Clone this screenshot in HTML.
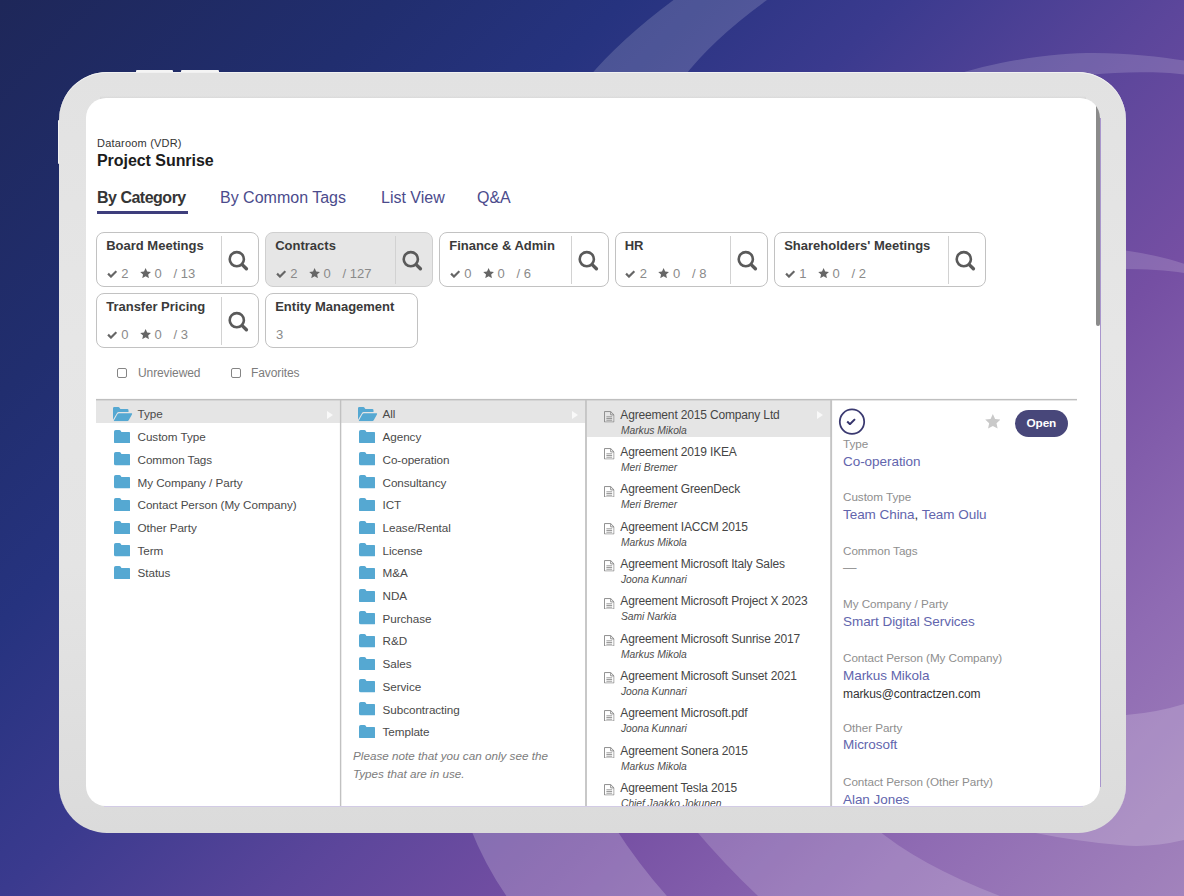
<!DOCTYPE html>
<html>
<head>
<meta charset="utf-8">
<title>Project Sunrise</title>
<style>
*{box-sizing:border-box;margin:0;padding:0}
html,body{width:1184px;height:896px;overflow:hidden}
body{font-family:"Liberation Sans",sans-serif;position:relative;background:#3b3a8e;color:#444}
.abs{position:absolute}
#bg{position:absolute;left:0;top:0;width:1184px;height:896px;
 background:linear-gradient(135deg,#1e2759 0%,#212e6f 19%,#26337f 30%,#3a3a8e 43%,#5c469b 57%,#754fa3 69%,#8f6bb3 85%,#a283bc 100%)}
#swoosh{position:absolute;left:0;top:0}
#frame{position:absolute;left:59px;top:72px;width:1067px;height:760.5px;border-radius:48px;
 background:linear-gradient(180deg,#e2e2e2 0%,#e6e6e6 35%,#e4e4e4 65%,#dbdbdb 100%);box-shadow:inset 0 1px 0 #f1f1f1}
.bump{position:absolute;top:69.8px;height:3.2px;background:#f4f4f4;border-radius:1px}
#screen{position:absolute;left:86px;top:98px;width:1014px;height:708px;border-radius:20px;background:#fff;overflow:hidden}
#page{position:absolute;left:-86px;top:-98px;width:1184px;height:896px}
.t{position:absolute;white-space:nowrap;line-height:1}
/* header */
.crumb{left:97px;top:138px;font-size:11px;color:#333;letter-spacing:.2px}
.title{left:97px;top:153px;font-size:16px;font-weight:700;color:#1c1c1c;letter-spacing:-.05px}
.tab{top:190px;font-size:16px;color:#4b4b8c}
.tab.on{color:#353535;font-weight:700;letter-spacing:-.5px}
.tabline{left:97px;top:210.6px;width:91px;height:3px;background:#3e3e7c}
/* cards */
.card{position:absolute;height:55px;border:1px solid #c2c2c2;border-radius:8px;background:#fff}
.card.sel{background:#e6e6e6;border-color:#cfcfcf}
.card .n{position:absolute;left:9.2px;top:6px;font-size:13px;font-weight:700;color:#3a3a3a;white-space:nowrap;line-height:1}
.card .s{position:absolute;left:10px;top:34px;font-size:13px;color:#8a8a8a;white-space:nowrap;line-height:1;height:14px}
.card .dv{position:absolute;right:36px;top:3px;width:1px;height:48px;background:#d2d2d2}
.card svg.q{position:absolute;right:9px;top:17px}
.s i{position:absolute;top:0;font-style:normal}
.s svg{position:absolute}

/* filters */
.cb{position:absolute;width:10px;height:10px;border:1px solid #858585;border-radius:2px;background:#fff;top:368px}
.fl{top:367px;font-size:12px;color:#7c7c7c;letter-spacing:-.1px}
/* panel */
.ptop{left:96px;top:399px;width:981px;height:2px;background:#bebebe}
.vd{position:absolute;top:400px;width:1px;height:420px;background:#b9b9b9}
.selrow{position:absolute;background:#e5e5e5}
.fi{position:absolute;color:#55a8d2}
.ft{font-size:11.7px;color:#4a4a4a;letter-spacing:-.05px;margin-left:-.5px}
.car{position:absolute;width:0;height:0;border-left:6.7px solid #f9f9f9;border-top:4px solid transparent;border-bottom:4px solid transparent}
.note{font-size:11.7px;font-style:italic;color:#7c7c7c}
.dt{font-size:12px;color:#454545;letter-spacing:-.16px}
.ds{font-size:10.3px;font-style:italic;color:#4e4e4e;letter-spacing:-.05px}
.di{position:absolute;color:#8a8a8a}
.lb{left:843px;font-size:11.7px;color:#8e8e8e;letter-spacing:-.05px}
.vl{left:843px;font-size:13.5px;color:#6265ad;letter-spacing:-.05px}
.em{left:843px;font-size:12px;color:#333;letter-spacing:-.1px}
.circ{position:absolute;left:839px;top:408.5px;width:26.2px;height:26.2px;border:1.7px solid #3a3970;border-radius:50%}
.open{position:absolute;left:1014.7px;top:409.8px;width:53.4px;height:27px;border-radius:13.5px;background:#48477a;color:#fff;font-size:11.8px;font-weight:700;text-align:center;line-height:27px;letter-spacing:-.15px}
</style>
</head>
<body>
<div id="bg"></div>
<svg id="swoosh" width="1184" height="896" viewBox="0 0 1184 896">
<g fill="#fff" fill-opacity=".16">
<path d="M588,78 Q621,39 673.5,0 L767,0 Q713,39 683,78 Z"/>
<path d="M945,78 C1005,58 1060,53 1094,53 C1130,53 1160,57 1184,60.5 L1184,74.5 C1160,71.5 1120,71.5 1090,75 Z"/>
<path d="M1090,246 Q1150,252 1184,263.8 L1184,273 Q1150,267.5 1090,269.5 Z"/>
<path d="M1000,750 L1126,715 Q1157,712.5 1184,704 L1184,840 Q1150,848 1122,845.3 Q1080,842 1030,832 L1000,800 Z" fill-opacity=".18"/>
<path d="M469.5,826 Q484.5,864.4 506.4,896 L666.9,896 Q638.6,864.4 614,826 Z" fill-opacity=".2"/>
<path d="M692,826 Q724.3,864.4 758,896 L1000,896 Q917.6,864.4 873,826 Z" fill-opacity=".17"/>
</g>
</svg>
<div class="bump" style="left:135.6px;width:37.4px"></div>
<div class="abs" style="left:57.6px;top:119.8px;width:3px;height:44.3px;background:#f2f2f2;border-radius:1px"></div>
<div class="bump" style="left:181.3px;width:37.7px"></div>
<div id="frame"></div>
<div class="abs" style="left:1100px;top:118px;width:1px;height:669px;background:#a996cd"></div>
<div class="abs" style="left:104px;top:806px;width:979px;height:1px;background:#d2cbe5"></div>
<div class="abs" style="left:100px;top:95.6px;width:986px;height:3px;background:linear-gradient(180deg,rgba(208,208,208,0),#d4d4d4)"></div>
<div id="screen"><div id="page">

<div class="t crumb">Dataroom (VDR)</div>
<div class="t title">Project Sunrise</div>
<div class="t tab on" style="left:97px">By Category</div>
<div class="t tab" style="left:220px">By Common Tags</div>
<div class="t tab" style="left:381px">List View</div>
<div class="t tab" style="left:477px">Q&amp;A</div>
<div class="abs tabline"></div>

<div class="abs" style="left:1096.3px;top:98px;width:3.8px;height:228.4px;background:#8b8b8b;border-radius:0 0 2px 2px"></div>
<!--CARDS-->
<svg width="0" height="0" style="position:absolute">
<defs>
<symbol id="ck" viewBox="0 0 10 8"><path d="M0.2 4.3 L1.7 2.8 L3.8 4.9 L8.3 0.4 L9.8 1.9 L3.8 7.9 Z" fill="currentColor"/></symbol>
<symbol id="st" viewBox="0 0 20 19"><path d="M10 0 L12.9 6.3 L19.8 7.1 L14.7 11.8 L16.1 18.6 L10 15.2 L3.9 18.6 L5.3 11.8 L0.2 7.1 L7.1 6.3 Z" fill="currentColor"/></symbol>
<symbol id="sr" viewBox="0 0 22 22"><circle cx="9.8" cy="9.2" r="7.1" fill="none" stroke="currentColor" stroke-width="2.6"/><path d="M15.2 14.6 L19.4 18.8" stroke="currentColor" stroke-width="3.4" stroke-linecap="round"/></symbol>
<symbol id="fc" viewBox="0 0 17 14" preserveAspectRatio="none"><path d="M1.8 0 H5.4 Q6.4 0 6.9 .8 L7.6 2 H15.2 Q17 2 17 3.8 V12.2 Q17 14 15.2 14 H1.8 Q0 14 0 12.2 V1.8 Q0 0 1.8 0 Z" fill="currentColor"/></symbol>
<symbol id="fo" viewBox="0 0 19 14" preserveAspectRatio="none"><path d="M1.2 0 H5.2 Q6 0 6.4 .7 L7.2 2 H14 Q15.2 2 15.2 3.2 V5 H5.6 Q4.4 5 3.8 6 L0 12.4 V1.2 Q0 0 1.2 0 Z" fill="currentColor"/><path d="M5.9 6.2 H18.2 Q19.3 6.2 18.7 7.2 L15.4 13 Q14.8 14 13.7 14 H1.2 Q0.4 14 0.9 13.1 L4.3 7.1 Q4.8 6.2 5.9 6.2 Z" fill="currentColor"/></symbol>
<symbol id="dc" viewBox="0 0 11 12"><path d="M0.5 0.5 H7 L10.5 4 V11.5 H0.5 Z M7 0.5 V4 H10.5" fill="none" stroke="currentColor" stroke-width="1"/><path d="M2.5 6 H8.5 M2.5 7.8 H8.5 M2.5 9.6 H8.5" stroke="currentColor" stroke-width="0.9"/></symbol>
</defs></svg>

<div class="card" style="left:96px;top:232px;width:163px"><div class="n">Board Meetings</div><div class="s"><svg style="left:-.3px;top:2.6px;color:#666" width="10.4" height="8.2"><use href="#ck"/></svg><i style="left:14.2px">2</i><svg style="left:32.6px;top:1px;color:#666" width="11.2" height="10.4"><use href="#st"/></svg><i style="left:47.5px">0</i><i style="left:66.5px">/ 13</i></div><div class="dv"></div><svg class="q" width="22" height="22" style="color:#5a5a5a"><use href="#sr"/></svg></div>
<div class="card sel" style="left:265px;top:232px;width:168px"><div class="n">Contracts</div><div class="s"><svg style="left:-.3px;top:2.6px;color:#666" width="10.4" height="8.2"><use href="#ck"/></svg><i style="left:14.2px">2</i><svg style="left:32.6px;top:1px;color:#666" width="11.2" height="10.4"><use href="#st"/></svg><i style="left:47.5px">0</i><i style="left:66.5px">/ 127</i></div><div class="dv"></div><svg class="q" width="22" height="22" style="color:#5a5a5a"><use href="#sr"/></svg></div>
<div class="card" style="left:439px;top:232px;width:170px"><div class="n">Finance &amp; Admin</div><div class="s"><svg style="left:-.3px;top:2.6px;color:#666" width="10.4" height="8.2"><use href="#ck"/></svg><i style="left:14.2px">0</i><svg style="left:32.6px;top:1px;color:#666" width="11.2" height="10.4"><use href="#st"/></svg><i style="left:47.5px">0</i><i style="left:66.5px">/ 6</i></div><div class="dv"></div><svg class="q" width="22" height="22" style="color:#5a5a5a"><use href="#sr"/></svg></div>
<div class="card" style="left:614.5px;top:232px;width:153px"><div class="n">HR</div><div class="s"><svg style="left:-.3px;top:2.6px;color:#666" width="10.4" height="8.2"><use href="#ck"/></svg><i style="left:14.2px">2</i><svg style="left:32.6px;top:1px;color:#666" width="11.2" height="10.4"><use href="#st"/></svg><i style="left:47.5px">0</i><i style="left:66.5px">/ 8</i></div><div class="dv"></div><svg class="q" width="22" height="22" style="color:#5a5a5a"><use href="#sr"/></svg></div>
<div class="card" style="left:774px;top:232px;width:212px"><div class="n">Shareholders' Meetings</div><div class="s"><svg style="left:-.3px;top:2.6px;color:#666" width="10.4" height="8.2"><use href="#ck"/></svg><i style="left:14.2px">1</i><svg style="left:32.6px;top:1px;color:#666" width="11.2" height="10.4"><use href="#st"/></svg><i style="left:47.5px">0</i><i style="left:66.5px">/ 2</i></div><div class="dv"></div><svg class="q" width="22" height="22" style="color:#5a5a5a"><use href="#sr"/></svg></div>
<div class="card" style="left:96px;top:293px;width:163px"><div class="n">Transfer Pricing</div><div class="s"><svg style="left:-.3px;top:2.6px;color:#666" width="10.4" height="8.2"><use href="#ck"/></svg><i style="left:14.2px">0</i><svg style="left:32.6px;top:1px;color:#666" width="11.2" height="10.4"><use href="#st"/></svg><i style="left:47.5px">0</i><i style="left:66.5px">/ 3</i></div><div class="dv"></div><svg class="q" width="22" height="22" style="color:#5a5a5a"><use href="#sr"/></svg></div>
<div class="card" style="left:265px;top:293px;width:153px"><div class="n">Entity Management</div><div class="s"><i style="left:0">3</i></div></div>
<!--/CARDS-->
<!--FILTERS-->
<div class="cb" style="left:117px"></div><div class="t fl" style="left:138px">Unreviewed</div>
<div class="cb" style="left:230.5px"></div><div class="t fl" style="left:251px">Favorites</div>
<!--/FILTERS-->
<!--PANEL-->
<div class="selrow" style="left:96px;top:400px;width:244px;height:23px"></div>
<div class="selrow" style="left:341px;top:400px;width:244.5px;height:23px"></div>
<div class="selrow" style="left:586.5px;top:400px;width:244px;height:37.4px"></div>
<svg class="abs" style="left:0;top:0" width="1184" height="896" viewBox="0 0 1184 896">
<rect x="96" y="398.9" width="981" height="1.5" fill="#bfbfbf"/>
<rect x="339.9" y="400" width="1.4" height="420" fill="#c1c1c1"/>
<rect x="585.1" y="400" width="1.8" height="420" fill="#c3c3c3"/>
<rect x="830.2" y="400" width="1.9" height="420" fill="#c4c4c4"/>
</svg>

<svg class="fi" style="left:113.2px;top:407.4px" width="19.4" height="14.3"><use href="#fo"/></svg>
<div class="t ft" style="left:138px;top:408.4px">Type</div>
<svg class="fi" style="left:113.60000000000001px;top:429.7px" width="16.6" height="13.6"><use href="#fc"/></svg>
<div class="t ft" style="left:138px;top:431.1px">Custom Type</div>
<svg class="fi" style="left:113.60000000000001px;top:452.4px" width="16.6" height="13.6"><use href="#fc"/></svg>
<div class="t ft" style="left:138px;top:453.8px">Common Tags</div>
<svg class="fi" style="left:113.60000000000001px;top:475.1px" width="16.6" height="13.6"><use href="#fc"/></svg>
<div class="t ft" style="left:138px;top:476.5px">My Company / Party</div>
<svg class="fi" style="left:113.60000000000001px;top:497.8px" width="16.6" height="13.6"><use href="#fc"/></svg>
<div class="t ft" style="left:138px;top:499.2px">Contact Person (My Company)</div>
<svg class="fi" style="left:113.60000000000001px;top:520.5px" width="16.6" height="13.6"><use href="#fc"/></svg>
<div class="t ft" style="left:138px;top:521.9px">Other Party</div>
<svg class="fi" style="left:113.60000000000001px;top:543.2px" width="16.6" height="13.6"><use href="#fc"/></svg>
<div class="t ft" style="left:138px;top:544.6px">Term</div>
<svg class="fi" style="left:113.60000000000001px;top:565.9px" width="16.6" height="13.6"><use href="#fc"/></svg>
<div class="t ft" style="left:138px;top:567.3px">Status</div>
<div class="car" style="left:327px;top:410.8px"></div>
<svg class="fi" style="left:358.4px;top:407.4px" width="19.4" height="14.3"><use href="#fo"/></svg>
<div class="t ft" style="left:383px;top:408.4px">All</div>
<svg class="fi" style="left:358.79999999999995px;top:429.7px" width="16.6" height="13.6"><use href="#fc"/></svg>
<div class="t ft" style="left:383px;top:431.1px">Agency</div>
<svg class="fi" style="left:358.79999999999995px;top:452.4px" width="16.6" height="13.6"><use href="#fc"/></svg>
<div class="t ft" style="left:383px;top:453.8px">Co-operation</div>
<svg class="fi" style="left:358.79999999999995px;top:475.1px" width="16.6" height="13.6"><use href="#fc"/></svg>
<div class="t ft" style="left:383px;top:476.5px">Consultancy</div>
<svg class="fi" style="left:358.79999999999995px;top:497.8px" width="16.6" height="13.6"><use href="#fc"/></svg>
<div class="t ft" style="left:383px;top:499.2px">ICT</div>
<svg class="fi" style="left:358.79999999999995px;top:520.5px" width="16.6" height="13.6"><use href="#fc"/></svg>
<div class="t ft" style="left:383px;top:521.9px">Lease/Rental</div>
<svg class="fi" style="left:358.79999999999995px;top:543.2px" width="16.6" height="13.6"><use href="#fc"/></svg>
<div class="t ft" style="left:383px;top:544.6px">License</div>
<svg class="fi" style="left:358.79999999999995px;top:565.9px" width="16.6" height="13.6"><use href="#fc"/></svg>
<div class="t ft" style="left:383px;top:567.3px">M&amp;A</div>
<svg class="fi" style="left:358.79999999999995px;top:588.6px" width="16.6" height="13.6"><use href="#fc"/></svg>
<div class="t ft" style="left:383px;top:590.0px">NDA</div>
<svg class="fi" style="left:358.79999999999995px;top:611.3px" width="16.6" height="13.6"><use href="#fc"/></svg>
<div class="t ft" style="left:383px;top:612.7px">Purchase</div>
<svg class="fi" style="left:358.79999999999995px;top:634.0px" width="16.6" height="13.6"><use href="#fc"/></svg>
<div class="t ft" style="left:383px;top:635.4px">R&amp;D</div>
<svg class="fi" style="left:358.79999999999995px;top:656.7px" width="16.6" height="13.6"><use href="#fc"/></svg>
<div class="t ft" style="left:383px;top:658.1px">Sales</div>
<svg class="fi" style="left:358.79999999999995px;top:679.4px" width="16.6" height="13.6"><use href="#fc"/></svg>
<div class="t ft" style="left:383px;top:680.8px">Service</div>
<svg class="fi" style="left:358.79999999999995px;top:702.1px" width="16.6" height="13.6"><use href="#fc"/></svg>
<div class="t ft" style="left:383px;top:703.5px">Subcontracting</div>
<svg class="fi" style="left:358.79999999999995px;top:724.8px" width="16.6" height="13.6"><use href="#fc"/></svg>
<div class="t ft" style="left:383px;top:726.2px">Template</div>
<div class="car" style="left:572px;top:410.8px"></div>
<div class="t note" style="left:353px;top:749.5px">Please note that you can only see the</div>
<div class="t note" style="left:353px;top:767.5px">Types that are in use.</div>
<svg class="di" style="left:604px;top:411.1px" width="10.5" height="11.6"><use href="#dc"/></svg>
<div class="t dt" style="left:620.3px;top:408.8px">Agreement 2015 Company Ltd</div>
<div class="t ds" style="left:621px;top:425.8px">Markus Mikola</div>
<svg class="di" style="left:604px;top:448.4px" width="10.5" height="11.6"><use href="#dc"/></svg>
<div class="t dt" style="left:620.3px;top:446.1px">Agreement 2019 IKEA</div>
<div class="t ds" style="left:621px;top:463.1px">Meri Bremer</div>
<svg class="di" style="left:604px;top:485.7px" width="10.5" height="11.6"><use href="#dc"/></svg>
<div class="t dt" style="left:620.3px;top:483.4px">Agreement GreenDeck</div>
<div class="t ds" style="left:621px;top:500.4px">Meri Bremer</div>
<svg class="di" style="left:604px;top:523.0px" width="10.5" height="11.6"><use href="#dc"/></svg>
<div class="t dt" style="left:620.3px;top:520.7px">Agreement IACCM 2015</div>
<div class="t ds" style="left:621px;top:537.7px">Markus Mikola</div>
<svg class="di" style="left:604px;top:560.3px" width="10.5" height="11.6"><use href="#dc"/></svg>
<div class="t dt" style="left:620.3px;top:558.0px">Agreement Microsoft Italy Sales</div>
<div class="t ds" style="left:621px;top:575.0px">Joona Kunnari</div>
<svg class="di" style="left:604px;top:597.6px" width="10.5" height="11.6"><use href="#dc"/></svg>
<div class="t dt" style="left:620.3px;top:595.3px">Agreement Microsoft Project X 2023</div>
<div class="t ds" style="left:621px;top:612.3px">Sami Narkia</div>
<svg class="di" style="left:604px;top:634.9px" width="10.5" height="11.6"><use href="#dc"/></svg>
<div class="t dt" style="left:620.3px;top:632.6px">Agreement Microsoft Sunrise 2017</div>
<div class="t ds" style="left:621px;top:649.6px">Markus Mikola</div>
<svg class="di" style="left:604px;top:672.2px" width="10.5" height="11.6"><use href="#dc"/></svg>
<div class="t dt" style="left:620.3px;top:669.9px">Agreement Microsoft Sunset 2021</div>
<div class="t ds" style="left:621px;top:686.9px">Joona Kunnari</div>
<svg class="di" style="left:604px;top:709.5px" width="10.5" height="11.6"><use href="#dc"/></svg>
<div class="t dt" style="left:620.3px;top:707.2px">Agreement Microsoft.pdf</div>
<div class="t ds" style="left:621px;top:724.2px">Joona Kunnari</div>
<svg class="di" style="left:604px;top:746.8px" width="10.5" height="11.6"><use href="#dc"/></svg>
<div class="t dt" style="left:620.3px;top:744.5px">Agreement Sonera 2015</div>
<div class="t ds" style="left:621px;top:761.5px">Markus Mikola</div>
<svg class="di" style="left:604px;top:784.1px" width="10.5" height="11.6"><use href="#dc"/></svg>
<div class="t dt" style="left:620.3px;top:781.8px">Agreement Tesla 2015</div>
<div class="t ds" style="left:621px;top:798.8px">Chief Jaakko Jokunen</div>
<div class="car" style="left:816.7px;top:410.8px"></div>
<svg class="abs" style="left:836px;top:406px" width="32" height="32" viewBox="0 0 32 32"><circle cx="16" cy="15.65" r="12.2" fill="none" stroke="#3a3970" stroke-width="1.75"/></svg><svg class="abs" style="left:846.2px;top:417.8px;color:#35346c" width="10.2" height="7.7"><use href="#ck"/></svg>
<svg class="abs" style="left:984.7px;top:414.3px;color:#c9c9c9" width="15.7" height="14.9"><use href="#st"/></svg>
<div class="open">Open</div>
<div class="t lb" style="top:437.9px">Type</div>
<div class="t vl" style="top:454.7px">Co-operation</div>
<div class="t lb" style="top:491.2px">Custom Type</div>
<div class="t vl" style="top:508.0px">Team China<span style="color:#333">,</span> Team Oulu</div>
<div class="t lb" style="top:544.6px">Common Tags</div>
<div class="t vl" style="top:561.4px"><span style="color:#999">&mdash;</span></div>
<div class="t lb" style="top:598.3px">My Company / Party</div>
<div class="t vl" style="top:615.1px">Smart Digital Services</div>
<div class="t lb" style="top:652.1px">Contact Person (My Company)</div>
<div class="t vl" style="top:668.9px">Markus Mikola</div>
<div class="t em" style="top:687.8px">markus@contractzen.com</div>
<div class="t lb" style="top:721.5px">Other Party</div>
<div class="t vl" style="top:738.3px">Microsoft</div>
<div class="t lb" style="top:775.7px">Contact Person (Other Party)</div>
<div class="t vl" style="top:792.5px">Alan Jones</div>
<!--/PANEL-->

</div></div>
</body>
</html>
